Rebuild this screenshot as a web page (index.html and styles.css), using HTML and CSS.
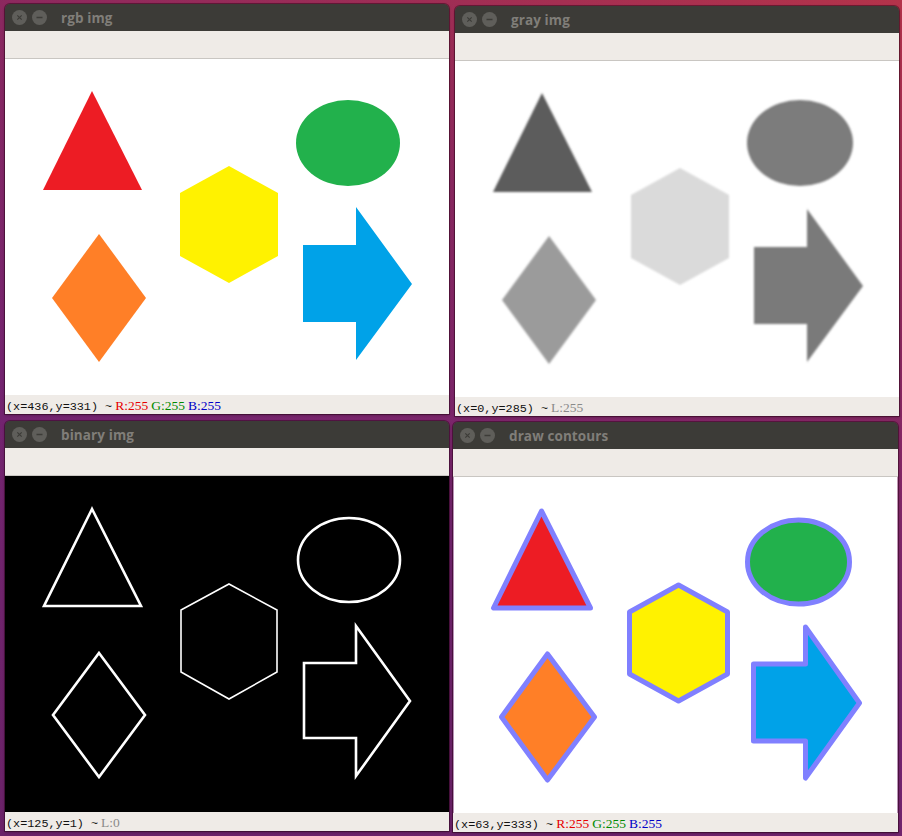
FILE: index.html
```html
<!DOCTYPE html>
<html>
<head>
<meta charset="utf-8">
<link rel="stylesheet" href="styles.css">
</head>
<body>
<div class="desktop">

  <div class="win win-rgb">
    <div class="titlebar">
      <span class="btn"><svg width="15" height="15" viewBox="0 0 15 15"><circle cx="7.5" cy="7.5" r="7.5" fill="#5f5e5a"/><path d="M5.3 5.3 L9.7 9.7 M9.7 5.3 L5.3 9.7" stroke="#3d3c38" stroke-width="1.2"/></svg></span>
      <span class="btn"><svg width="15" height="15" viewBox="0 0 15 15"><circle cx="7.5" cy="7.5" r="7.5" fill="#5f5e5a"/><path d="M4.5 7.5 L10.5 7.5" stroke="#3d3c38" stroke-width="1.3"/></svg></span>
      <span class="title">rgb img</span>
    </div>
    <div class="toolbar"></div>
    <div class="canvas">
      <svg class="img" viewBox="0 0 444 336" width="444" height="336">
        <rect width="444" height="336" fill="#fff"/>
        <polygon points="87,32 38,131 137,131" fill="#ed1c24"/>
        <ellipse cx="343" cy="84" rx="52" ry="43" fill="#22b14c"/>
        <polygon points="224,107 273,134 273,197 224,224 175,197 175,134" fill="#fff200"/>
        <polygon points="94,175 141,239 94,303 47,239" fill="#ff7f27"/>
        <polygon points="298,186 351,186 351,148 407,225 351,301 351,263 298,263" fill="#00a2e8"/>
      </svg>
    </div>
    <div class="status"><span class="pos">(x=436,y=331) ~</span><span class="r">R:255</span><span class="g">G:255</span><span class="b">B:255</span></div>
  </div>

  <div class="win win-gray">
    <div class="titlebar">
      <span class="btn"><svg width="15" height="15" viewBox="0 0 15 15"><circle cx="7.5" cy="7.5" r="7.5" fill="#5f5e5a"/><path d="M5.3 5.3 L9.7 9.7 M9.7 5.3 L5.3 9.7" stroke="#3d3c38" stroke-width="1.2"/></svg></span>
      <span class="btn"><svg width="15" height="15" viewBox="0 0 15 15"><circle cx="7.5" cy="7.5" r="7.5" fill="#5f5e5a"/><path d="M4.5 7.5 L10.5 7.5" stroke="#3d3c38" stroke-width="1.3"/></svg></span>
      <span class="title">gray img</span>
    </div>
    <div class="toolbar"></div>
    <div class="canvas">
      <svg class="img" viewBox="0 0 444 336" width="444" height="336">
        <defs><filter id="blur" x="-10%" y="-10%" width="120%" height="120%"><feGaussianBlur stdDeviation="1.1"/></filter></defs>
        <rect width="444" height="336" fill="#fff"/>
        <g filter="url(#blur)">
          <polygon points="87,32 38,131 137,131" fill="#5b5b5b"/>
          <ellipse cx="345" cy="82" rx="53" ry="43" fill="#7b7b7b"/>
          <polygon points="225,107 274,134 274,197 225,224 176,197 176,134" fill="#dadada"/>
          <polygon points="94,175 141,239 94,303 47,239" fill="#9b9b9b"/>
          <polygon points="299,186 352,186 352,148 408,225 352,301 352,263 299,263" fill="#7a7a7a"/>
        </g>
      </svg>
    </div>
    <div class="status"><span class="pos">(x=0,y=285) ~</span><span class="l">L:255</span></div>
  </div>

  <div class="win win-bin">
    <div class="titlebar">
      <span class="btn"><svg width="15" height="15" viewBox="0 0 15 15"><circle cx="7.5" cy="7.5" r="7.5" fill="#5f5e5a"/><path d="M5.3 5.3 L9.7 9.7 M9.7 5.3 L5.3 9.7" stroke="#3d3c38" stroke-width="1.2"/></svg></span>
      <span class="btn"><svg width="15" height="15" viewBox="0 0 15 15"><circle cx="7.5" cy="7.5" r="7.5" fill="#5f5e5a"/><path d="M4.5 7.5 L10.5 7.5" stroke="#3d3c38" stroke-width="1.3"/></svg></span>
      <span class="title">binary img</span>
    </div>
    <div class="toolbar"></div>
    <div class="canvas">
      <svg class="img" viewBox="0 0 444 336" width="444" height="336">
        <rect width="444" height="336" fill="#000"/>
        <g fill="none" stroke="#fff" stroke-width="2.6" stroke-linejoin="miter">
          <polygon points="87,33 39,130 136,130"/>
          <ellipse cx="344" cy="84" rx="51" ry="42"/>
          <polygon points="224,108 272,134 272,196 224,223 176,196 176,134" stroke-width="1.6"/>
          <polygon points="94,177 140,239 94,301 48,239"/>
          <polygon points="299,187 351,187 351,150 405,225 351,300 351,262 299,262"/>
        </g>
      </svg>
    </div>
    <div class="status"><span class="pos">(x=125,y=1) ~</span><span class="l">L:0</span></div>
  </div>

  <div class="win win-cnt">
    <div class="titlebar">
      <span class="btn"><svg width="15" height="15" viewBox="0 0 15 15"><circle cx="7.5" cy="7.5" r="7.5" fill="#5f5e5a"/><path d="M5.3 5.3 L9.7 9.7 M9.7 5.3 L5.3 9.7" stroke="#3d3c38" stroke-width="1.2"/></svg></span>
      <span class="btn"><svg width="15" height="15" viewBox="0 0 15 15"><circle cx="7.5" cy="7.5" r="7.5" fill="#5f5e5a"/><path d="M4.5 7.5 L10.5 7.5" stroke="#3d3c38" stroke-width="1.3"/></svg></span>
      <span class="title">draw contours</span>
    </div>
    <div class="toolbar"></div>
    <div class="canvas">
      <svg class="img" viewBox="0 0 444 336" width="444" height="336">
        <rect width="444" height="336" fill="#fff"/>
        <g stroke="#8080ff" stroke-width="5" stroke-linejoin="round">
          <polygon points="88,34 40,131 137,131" fill="#ed1c24"/>
          <ellipse cx="345" cy="85" rx="51" ry="42" fill="#22b14c"/>
          <polygon points="225,108 274,135 274,197 225,224 176,197 176,135" fill="#fff200"/>
          <polygon points="94,177 141,240 94,303 48,240" fill="#ff7f27"/>
          <polygon points="300,187 352,187 352,150 406,226 352,301 352,264 300,264" fill="#00a2e8"/>
        </g>
      </svg>
    </div>
    <div class="status"><span class="pos">(x=63,y=333) ~</span><span class="r">R:255</span><span class="g">G:255</span><span class="b">B:255</span></div>
  </div>

</div>
</body>
</html>
```

FILE: styles.css
```css
html, body {
  margin: 0;
  padding: 0;
}
body {
  width: 902px;
  height: 836px;
  overflow: hidden;
}
.desktop {
  position: relative;
  width: 902px;
  height: 836px;
  background: linear-gradient(200deg, #b4334a 0%, #8a2860 30%, #742470 60%, #6a2268 100%);
}
.win {
  position: absolute;
  width: 444px;
  display: flex;
  flex-direction: column;
  box-shadow: 0 0 0 1px rgba(40, 0, 20, 0.45), 0 1px 3px rgba(0, 0, 0, 0.35);
  border-radius: 5px 5px 0 0;
  overflow: hidden;
}
.win-rgb { left: 5px; top: 4px; }
.win-gray { left: 455px; top: 6px; }
.win-bin { left: 5px; top: 421px; }
.win-cnt { left: 453px; top: 422px; width: 445px; }

.titlebar {
  height: 27px;
  background: #3c3b37;
  display: flex;
  align-items: center;
  padding-left: 7px;
  gap: 5px;
}
.btn {
  width: 15px;
  height: 15px;
  display: flex;
}
.title {
  margin-left: 9px;
  font-family: "Open Sans", "DejaVu Sans", sans-serif;
  font-weight: 700;
  font-size: 13.5px;
  color: #807e79;
  letter-spacing: 0.1px;
}
.toolbar {
  height: 27px;
  background: #efebe7;
  border-bottom: 1px solid #c9c6c2;
}
.canvas {
  height: 336px;
  display: flex;
}
.img {
  display: block;
  width: 100%;
  height: 336px;
}
.status {
  height: 19px;
  background: #efebe7;
  display: flex;
  align-items: baseline;
  gap: 3px;
  line-height: 21px;
  padding-left: 1px;
  white-space: nowrap;
}
.pos {
  font-family: "Liberation Mono", "DejaVu Sans Mono", monospace;
  font-size: 11.8px;
  color: #111;
}
.r, .g, .b, .l {
  font-family: "Liberation Serif", "DejaVu Serif", serif;
  font-size: 13.5px;
}
.r { color: #e60000; }
.g { color: #008a00; }
.b { color: #0000c8; }
.l { color: #8a8a8a; }
```
